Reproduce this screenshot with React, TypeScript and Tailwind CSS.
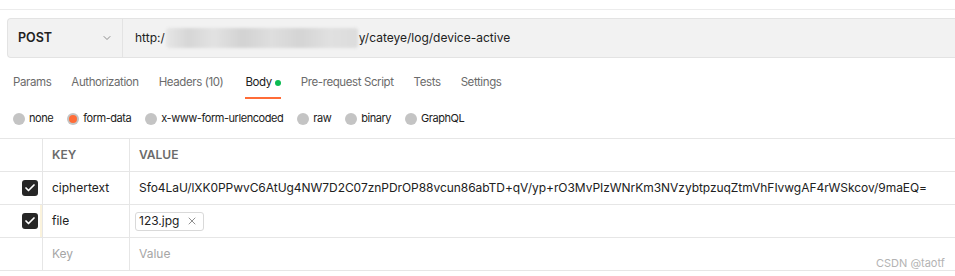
import { ChevronDown, X, Check } from "lucide-react";

const tabs = [
  { label: "Params" },
  { label: "Authorization" },
  { label: "Headers (10)" },
  { label: "Body", active: true },
  { label: "Pre-request Script" },
  { label: "Tests" },
  { label: "Settings" },
];

const bodyTypes = [
  { label: "none" },
  { label: "form-data", checked: true },
  { label: "x-www-form-urlencoded" },
  { label: "raw" },
  { label: "binary" },
  { label: "GraphQL" },
];

const Checkbox = () => (
  <span className="flex h-4 w-4 items-center justify-center rounded-[3px] bg-[#262626]">
    <Check size={12} strokeWidth={3.5} className="text-white" />
  </span>
);

const App = () => {
  return (
    <div className="relative h-[276px] w-[955px] overflow-hidden bg-white font-['Inter',sans-serif] text-[#212121]">
      <div className="h-[10px] border-b border-[#ececec]" />

      {/* request bar */}
      <div className="ml-[7px] mt-[8px] flex h-[40px] rounded-l-[4px] border border-r-0 border-[#e3e3e3] bg-[#f2f2f2]">
        <div className="flex w-[115px] items-center justify-between border-r border-[#e3e3e3] pl-[10px] pr-[9px]">
          <span className="text-[12.5px] font-semibold">POST</span>
          <ChevronDown size={12} strokeWidth={1.5} className="text-[#6b6b6b]" />
        </div>
        <div className="flex items-center pl-[12px] text-[12px]">
          <span>http:/</span>
          <span className="mx-[1px] h-[20px] w-[192px] rounded-[3px] bg-[linear-gradient(90deg,#e6e6e6_0%,#d6d6d6_12%,#e2e2e2_25%,#d2d2d2_40%,#dedede_55%,#d4d4d4_70%,#e0e0e0_85%,#dcdcdc_100%)] blur-[1.5px]" />
          <span>y/cateye/log/device-active</span>
        </div>
      </div>

      {/* tabs */}
      <div className="mt-[9px] flex h-[32px] gap-[20px] pl-[13px] text-[11.5px] tracking-[-0.4px]">
        {tabs.map((t) => (
          <div
            key={t.label}
            className={`flex items-center border-b-2 pt-[2px] ${
              t.active ? "ml-[2px] border-[#ff6c37] text-[#212121]" : "border-transparent text-[#6b6b6b]"
            }`}
          >
            {t.label}
            {t.active && <span className="ml-[3px] h-[6px] w-[6px] rounded-full bg-[#0cbb52]" />}
          </div>
        ))}
      </div>

      {/* body types */}
      <div className="flex h-[39px] items-center gap-[14px] pl-[13px] text-[11px] tracking-[-0.45px]">
        {bodyTypes.map((b) => (
          <label key={b.label} className="flex items-center gap-[4px]">
            <span className="flex h-[12px] w-[12px] items-center justify-center rounded-full bg-[#c4c4c4]">
              {b.checked && <span className="h-[8px] w-[8px] rounded-full bg-[#ff6c37]" />}
            </span>
            <span className="text-[#212121]">{b.label}</span>
          </label>
        ))}
      </div>

      {/* params table */}
      <div className="grid grid-cols-[43px_87px_1fr] border-t border-[#e6e6e6] text-[12px]">
        <div className="h-[33px] border-b border-r border-[#e6e6e6]" />
        <div className="flex h-[33px] items-center border-b border-r border-[#e6e6e6] pl-[9px] font-semibold text-[#6b6b6b]">
          KEY
        </div>
        <div className="flex h-[33px] items-center border-b border-[#e6e6e6] pl-[9px] font-semibold text-[#6b6b6b]">
          VALUE
        </div>

        <div className="flex h-[33px] items-center border-b border-r border-[#e6e6e6] pl-[22px]">
          <Checkbox />
        </div>
        <div className="flex h-[33px] items-center border-b border-r border-[#e6e6e6] pl-[9px]">ciphertext</div>
        <div className="flex h-[33px] items-center border-b border-[#e6e6e6] pl-[9px] tracking-[-0.05px]">
          Sfo4LaU/lXK0PPwvC6AtUg4NW7D2C07znPDrOP88vcun86abTD+qV/yp+rO3MvPIzWNrKm3NVzybtpzuqZtmVhFIvwgAF4rWSkcov/9maEQ=
        </div>

        <div className="flex h-[33px] items-center justify-between border-b border-r border-[#e6e6e6] pl-[22px]">
          <Checkbox />
          <span className="h-full w-[2px] bg-[#fbf3dc]" />
        </div>
        <div className="flex h-[33px] items-center border-b border-r border-[#e6e6e6] pl-[9px]">file</div>
        <div className="flex h-[33px] items-center border-b border-[#e6e6e6] pl-[5px]">
          <span className="flex h-[19px] items-center gap-[7px] rounded-[3px] border border-[#d9d9d9] pl-[3px] pr-[5px]">
            123.jpg
            <X size={12} strokeWidth={1.5} className="text-[#6b6b6b]" />
          </span>
        </div>

        <div className="h-[33px] border-b border-r border-[#e6e6e6]" />
        <div className="flex h-[33px] items-center border-b border-r border-[#e6e6e6] pl-[9px] text-[#a6a6a6]">Key</div>
        <div className="flex h-[33px] items-center border-b border-[#e6e6e6] pl-[9px] text-[#a6a6a6]">Value</div>
      </div>

      <span className="absolute left-[876px] top-[255px] text-[11px] text-[#b3b3b3]">CSDN @taotf</span>
    </div>
  );
};

export default App;
